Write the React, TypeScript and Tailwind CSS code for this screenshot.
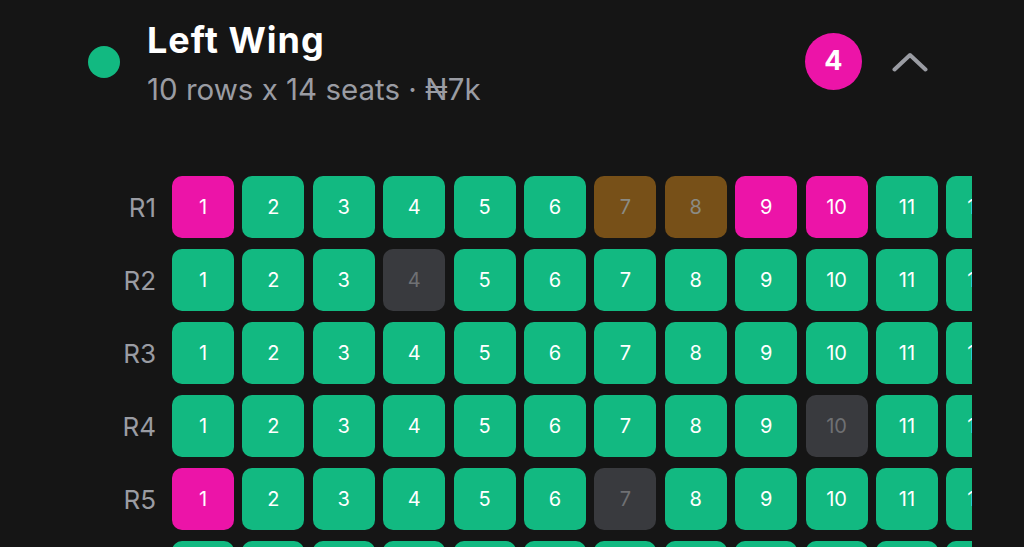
import React from 'react';

type SeatState = 'open' | 'picked' | 'held' | 'taken';

const ROWS = 10;
const SEATS = 14;

// seats that are not plain open, keyed "row-seat"
const SPECIAL: Record<string, SeatState> = {
  '1-1': 'picked',
  '1-7': 'held',
  '1-8': 'held',
  '1-9': 'picked',
  '1-10': 'picked',
  '2-4': 'taken',
  '4-10': 'taken',
  '5-1': 'picked',
  '5-7': 'taken',
};

const SEAT_CLASS: Record<SeatState, string> = {
  open: 'bg-[#12b981] text-white',
  picked: 'bg-[#ec14a8] text-white',
  held: 'bg-[#775018] text-[#8b8b84]',
  taken: 'bg-[#393a3e] text-[#6f7073]',
};

function Seat({row, n}: {row: number; n: number}) {
  const state = SPECIAL[`${row}-${n}`] ?? 'open';
  return (
    <div
      className={`w-[62px] h-[62px] shrink-0 rounded-[10px] flex items-center justify-center text-[20px] ${SEAT_CLASS[state]}`}
    >
      {n}
    </div>
  );
}

export default function App() {
  return (
    <div
      className="w-full h-[547px] overflow-hidden bg-[#151515]"
      style={{fontFamily: 'Inter, "Noto Sans", sans-serif'}}
    >
      {/* Section header */}
      <div className="flex items-start pl-[88px] pr-[96px] pt-[18px]">
        <span className="mt-[27.5px] w-[32px] h-[32px] rounded-full bg-[#12b981] shrink-0" />
        <div className="ml-[27px] flex flex-col">
          <span className="text-[36px] leading-[44px] font-bold text-white tracking-[1px]">
            Left Wing
          </span>
          <span className="mt-[5px] text-[29.5px] leading-[44px] text-[#9a9ca3]">
            10 rows x 14 seats · ₦7k
          </span>
        </div>
        <div className="ml-auto mt-[15px] flex items-center gap-[30px]">
          <span className="w-[57px] h-[57px] rounded-full bg-[#ec14a8] text-white text-[27px] font-bold flex items-center justify-center">
            4
          </span>
          <svg width="36" height="20" viewBox="0 0 36 20" fill="none">
            <path
              d="M2.5 17.5 L18 3 L33.5 17.5"
              stroke="#9a9ca3"
              strokeWidth="4"
              strokeLinecap="round"
              strokeLinejoin="round"
            />
          </svg>
        </div>
      </div>

      {/* Seat map */}
      <div className="mt-[65px] ml-[104px] w-[868px] overflow-hidden flex flex-col gap-[11px]">
        {Array.from({length: ROWS}, (_, r) => (
          <div key={r} className="flex items-center">
            <span className="w-[52px] shrink-0 text-right text-[26px] text-[#9a9ca3]">
              R{r + 1}
            </span>
            <div className="ml-[16px] flex gap-[8.4px]">
              {Array.from({length: SEATS}, (_, s) => (
                <Seat key={s} row={r + 1} n={s + 1} />
              ))}
            </div>
          </div>
        ))}
      </div>
    </div>
  );
}
